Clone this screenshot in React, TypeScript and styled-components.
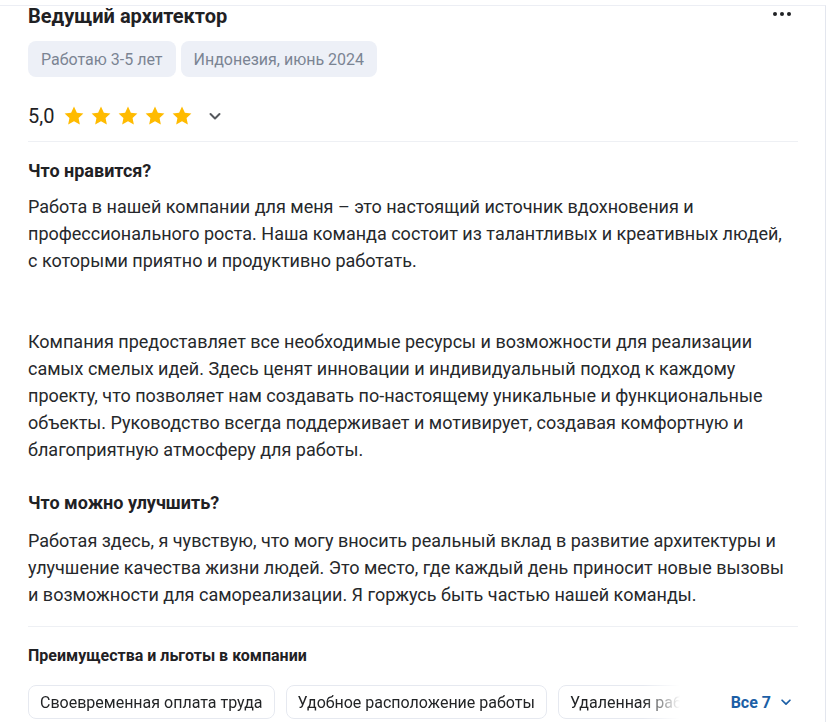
import styled, { createGlobalStyle } from 'styled-components'

const GlobalStyle = createGlobalStyle`
  html, body {
    margin: 0;
    padding: 0;
    background: #ffffff;
  }
  body {
    font-family: Roboto, "Noto Sans", "Liberation Sans", sans-serif;
    color: #222426;
    -webkit-font-smoothing: antialiased;
  }
`

const StyledCard = styled.div`
  margin-top: 5px;
  width: 826px;
  height: 717px;
  overflow: hidden;
  box-sizing: border-box;
  border-top: 1px solid #eceef4;
  border-right: 1px solid #e3e6ee;
  padding: 0 28px 0 28px;
  background: #ffffff;
`

const StyledHeader = styled.div`
  display: flex;
  align-items: flex-start;
  justify-content: space-between;
  margin-top: -2px;
`

const StyledTitle = styled.h2`
  margin: 0;
  font-size: 20px;
  line-height: 24px;
  font-weight: 700;
  color: #1f2124;
`

const StyledMoreButton = styled.button`
  display: flex;
  gap: 3px;
  align-items: center;
  padding: 0;
  margin: 3px 6px 0 0;
  height: 14px;
  border: none;
  background: none;
  cursor: pointer;
`

const StyledDot = styled.span`
  width: 4px;
  height: 4px;
  border-radius: 50%;
  background: #1f2124;
`

const StyledTags = styled.div`
  display: flex;
  gap: 5px;
  margin-top: 13px;
`

const StyledTag = styled.span`
  display: inline-flex;
  align-items: center;
  height: 36px;
  padding: 0 13px;
  border-radius: 8px;
  background: #edf0f7;
  color: #7b8493;
  font-size: 16px;
`

const StyledRating = styled.div`
  display: flex;
  align-items: center;
  height: 28px;
  margin-top: 25px;
`

const StyledScore = styled.span`
  font-size: 20px;
  line-height: 28px;
  color: #1f2124;
  margin-right: 8px;
`

const StyledStars = styled.div`
  display: flex;
  gap: 3px;
`

const StyledExpand = styled.button`
  display: flex;
  align-items: center;
  margin-left: 13px;
  padding: 0;
  border: none;
  background: none;
  cursor: pointer;
`

const StyledDivider = styled.hr<{ $offset: number }>`
  margin: ${({ $offset }) => $offset}px 0 0;
  border: none;
  border-top: 1px solid #eef0f4;
  width: 770px;
`

const StyledSectionTitle = styled.h3<{ $offset: number }>`
  margin: ${({ $offset }) => $offset}px 0 0;
  font-size: 18px;
  line-height: 24px;
  font-weight: 700;
  color: #1f2124;
`

const StyledText = styled.p<{ $offset: number }>`
  margin: ${({ $offset }) => $offset}px 0 0;
  width: 764px;
  font-size: 18px;
  line-height: 27px;
  color: #26282b;
`

const StyledBenefitsTitle = styled.h4`
  margin: 19px 0 0;
  font-size: 16px;
  line-height: 20px;
  font-weight: 700;
  color: #1f2124;
`

const StyledBenefitsRow = styled.div`
  display: flex;
  align-items: center;
  margin-top: 19px;
  width: 770px;
`

const StyledBenefitsList = styled.div`
  display: flex;
  gap: 11px;
  width: 662px;
  overflow: hidden;
  mask-image: linear-gradient(to right, #000 615px, transparent 652px);
`

const StyledBenefit = styled.span`
  flex: 0 0 auto;
  display: inline-flex;
  align-items: center;
  height: 34px;
  padding: 0 11px;
  box-sizing: border-box;
  border: 1px solid #e6e9f0;
  border-radius: 8px;
  font-size: 16px;
  color: #222426;
  white-space: nowrap;
`

const StyledShowAll = styled.button`
  display: flex;
  align-items: center;
  gap: 8px;
  margin-left: auto;
  margin-right: 5px;
  padding: 0;
  border: none;
  background: none;
  font-family: inherit;
  font-size: 16px;
  font-weight: 700;
  color: #1c5fa6;
  cursor: pointer;
`

const Star = () => (
  <svg width="24" height="24" viewBox="0 0 24 24">
    <path
      d="M12 2.6l2.86 6.04 6.54.78-4.84 4.52 1.28 6.5L12 17.2l-5.84 3.24 1.28-6.5L2.6 9.42l6.54-.78z"
      fill="#ffbb00"
    />
  </svg>
)

const Chevron = ({ color, size }: { color: string; size: number }) => (
  <svg width={size} height={size} viewBox="0 0 16 16">
    <path
      d="M3.5 6l4.5 4.5L12.5 6"
      fill="none"
      stroke={color}
      strokeWidth="2"
      strokeLinecap="round"
      strokeLinejoin="round"
    />
  </svg>
)

const benefits = [
  'Своевременная оплата труда',
  'Удобное расположение работы',
  'Удаленная работа',
]

const App = () => (
  <>
    <GlobalStyle />
    <StyledCard>
      <StyledHeader>
        <StyledTitle>Ведущий архитектор</StyledTitle>
        <StyledMoreButton aria-label="Ещё">
          <StyledDot />
          <StyledDot />
          <StyledDot />
        </StyledMoreButton>
      </StyledHeader>
      <StyledTags>
        <StyledTag>Работаю 3-5 лет</StyledTag>
        <StyledTag>Индонезия, июнь 2024</StyledTag>
      </StyledTags>
      <StyledRating>
        <StyledScore>5,0</StyledScore>
        <StyledStars>
          {[0, 1, 2, 3, 4].map((i) => (
            <Star key={i} />
          ))}
        </StyledStars>
        <StyledExpand aria-label="Подробнее">
          <Chevron color="#55585d" size={16} />
        </StyledExpand>
      </StyledRating>
      <StyledDivider $offset={11} />
      <StyledSectionTitle $offset={17}>Что нравится?</StyledSectionTitle>
      <StyledText $offset={10}>
        Работа в нашей компании для меня – это настоящий источник вдохновения и
        профессионального роста. Наша команда состоит из талантливых и
        креативных людей, с которыми приятно и продуктивно работать.
      </StyledText>
      <StyledText $offset={54}>
        Компания предоставляет все необходимые ресурсы и возможности для
        реализации самых смелых идей. Здесь ценят инновации и индивидуальный
        подход к каждому проекту, что позволяет нам создавать по-настоящему
        уникальные и функциональные объекты. Руководство всегда поддерживает и
        мотивирует, создавая комфортную и благоприятную атмосферу для работы.
      </StyledText>
      <StyledSectionTitle $offset={28}>Что можно улучшить?</StyledSectionTitle>
      <StyledText $offset={12}>
        Работая здесь, я чувствую, что могу вносить реальный вклад в развитие
        архитектуры и улучшение качества жизни людей. Это место, где каждый
        день приносит новые вызовы и возможности для самореализации. Я горжусь
        быть частью нашей команды.
      </StyledText>
      <StyledDivider $offset={18} />
      <StyledBenefitsTitle>Преимущества и льготы в компании</StyledBenefitsTitle>
      <StyledBenefitsRow>
        <StyledBenefitsList>
          {benefits.map((b) => (
            <StyledBenefit key={b}>{b}</StyledBenefit>
          ))}
        </StyledBenefitsList>
        <StyledShowAll>
          Все 7
          <Chevron color="#1c5fa6" size={14} />
        </StyledShowAll>
      </StyledBenefitsRow>
    </StyledCard>
  </>
)

export default App
